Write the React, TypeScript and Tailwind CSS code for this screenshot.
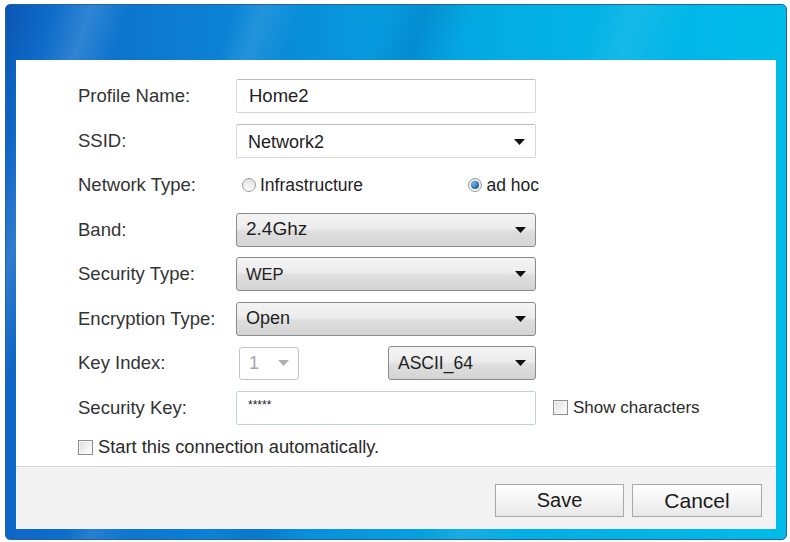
import React from 'react';

function Arrow({ muted = false }: { muted?: boolean }) {
  return (
    <svg width="11" height="6" viewBox="0 0 11 6" className="shrink-0">
      <polygon points="0,0 11,0 5.5,6" fill={muted ? '#b0b0b0' : '#111'} />
    </svg>
  );
}

function Checkbox() {
  return (
    <span className="inline-block w-[15px] h-[15px] border border-[#8e8f8f] bg-[linear-gradient(135deg,#dcdcdc_0%,#f4f4f4_60%,#ffffff_100%)] shadow-[inset_0_0_0_1px_#f6f6f6] shrink-0" />
  );
}

function Radio({ checked = false }: { checked?: boolean }) {
  return (
    <span className="inline-flex items-center justify-center w-[14px] h-[14px] rounded-full border border-[#9a9a9a] bg-[linear-gradient(180deg,#e2e2e2,#fbfbfb)] shrink-0">
      {checked && (
        <span className="w-[8px] h-[8px] rounded-full bg-[radial-gradient(circle_at_35%_35%,#7fb8e8,#1d5fa8_70%)]" />
      )}
    </span>
  );
}

function Label({ children }: { children: React.ReactNode }) {
  return <div className="w-[158px] shrink-0 text-[18.5px] text-[#333]">{children}</div>;
}

function Select({ value, width = 'w-[300px]', size = 'text-[18px]' }: { value: string; width?: string; size?: string }) {
  return (
    <div
      className={`${width} h-[34px] flex items-center justify-between pl-[9px] pr-[9px] rounded-[3px] border border-[#8b8b8b] bg-[linear-gradient(180deg,#f4f4f4_0%,#ececec_45%,#dedede_55%,#d4d4d4_100%)] ${size} text-[#1e1e1e]`}
    >
      <span>{value}</span>
      <Arrow />
    </div>
  );
}

export default function App() {
  return (
    <div className="w-[790px] h-[542px] bg-white overflow-hidden font-['Liberation_Sans',Arial,sans-serif]">
      <div className="ml-[5px] mt-[4px] w-[782px] h-[536px] rounded-[5px] border border-[#24649c] bg-[linear-gradient(108deg,rgba(0,30,110,0.22)_0%,transparent_5%,rgba(255,255,255,0.14)_9%,transparent_13%,transparent_24%,rgba(255,255,255,0.1)_27%,transparent_31%,transparent_40%,rgba(0,40,130,0.16)_44%,transparent_49%,transparent_62%,rgba(255,255,255,0.08)_66%,transparent_72%),linear-gradient(90deg,#0e66c6_0%,#0c7fd4_25%,#0797dc_45%,#03aee4_65%,#00bce9_100%)] pt-[55px] px-[10px] pb-[10px] flex">
        <div className="flex-1 flex flex-col bg-white">
          {/* Form */}
          <div className="flex-1 pl-[62px] pt-[19px] flex flex-col gap-[10.5px]">
            <div className="flex items-center h-[34px]">
              <Label>Profile Name:</Label>
              <div className="w-[300px] h-[34px] flex items-center pl-[12px] border border-[#d6d6d6] border-t-[#bcbcbc] rounded-[2px] text-[18.5px] text-[#1e1e1e]">
                Home2
              </div>
            </div>

            <div className="flex items-center h-[34px]">
              <Label>SSID:</Label>
              <div className="w-[300px] h-[34px] flex items-center justify-between pl-[11px] pr-[10px] pt-[3px] border border-[#d6d6d6] border-t-[#bcbcbc] rounded-[2px] text-[18px] text-[#1e1e1e]">
                <span>Network2</span>
                <Arrow />
              </div>
            </div>

            <div className="flex items-center h-[34px]">
              <Label>Network Type:</Label>
              <div className="flex items-center w-[300px] pl-[6px] text-[17.5px] text-[#1e1e1e]">
                <Radio />
                <span className="ml-[4px]">Infrastructure</span>
                <div className="ml-auto flex items-center gap-[4px] mr-[-3px]">
                  <Radio checked />
                  <span>ad hoc</span>
                </div>
              </div>
            </div>

            <div className="flex items-center h-[34px]">
              <Label>Band:</Label>
              <Select value="2.4Ghz" size="text-[19px]" />
            </div>

            <div className="flex items-center h-[34px]">
              <Label>Security Type:</Label>
              <Select value="WEP" size="text-[16.5px]" />
            </div>

            <div className="flex items-center h-[34px]">
              <Label>Encryption Type:</Label>
              <Select value="Open" />
            </div>

            <div className="flex items-center h-[34px]">
              <Label>Key Index:</Label>
              <div className="flex items-center w-[300px]">
                <div className="ml-[3px] w-[60px] h-[33px] flex items-center justify-between pl-[9px] pr-[9px] rounded-[3px] border border-[#c4c4c4] text-[18px] text-[#a6a6a6]">
                  <span>1</span>
                  <Arrow muted />
                </div>
                <div className="ml-auto">
                  <Select value="ASCII_64" width="w-[148px]" size="text-[17.5px]" />
                </div>
              </div>
            </div>

            <div className="flex items-center h-[34px]">
              <Label>Security Key:</Label>
              <div className="w-[300px] h-[34px] flex items-center pl-[11px] pb-[6px] border border-[#bcd3e4] rounded-[2px] text-[12px] text-[#222]">
                *****
              </div>
              <div className="ml-[17px] flex items-center gap-[5px] text-[17px] text-[#2a2a2a]">
                <Checkbox />
                <span>Show characters</span>
              </div>
            </div>

            <div className="flex items-center h-[22px] mt-[1px] gap-[5px] text-[18.3px] text-[#2a2a2a]">
              <Checkbox />
              <span>Start this connection automatically.</span>
            </div>
          </div>

          {/* Footer */}
          <div className="h-[63px] shrink-0 border-t border-[#d8d8d8] bg-[#f2f2f2] flex justify-end items-center gap-[8px] pr-[14px] pt-[4px]">
            <button className="w-[129px] h-[33px] border border-[#a8a8a8] bg-[linear-gradient(180deg,#ffffff_0%,#f4f4f4_50%,#e8e8e8_100%)] text-[20px] text-[#1a1a1a]">
              Save
            </button>
            <button className="w-[130px] h-[33px] border border-[#a8a8a8] bg-[linear-gradient(180deg,#ffffff_0%,#f4f4f4_50%,#e8e8e8_100%)] text-[21px] text-[#1a1a1a]">
              Cancel
            </button>
          </div>
        </div>
      </div>
    </div>
  );
}
